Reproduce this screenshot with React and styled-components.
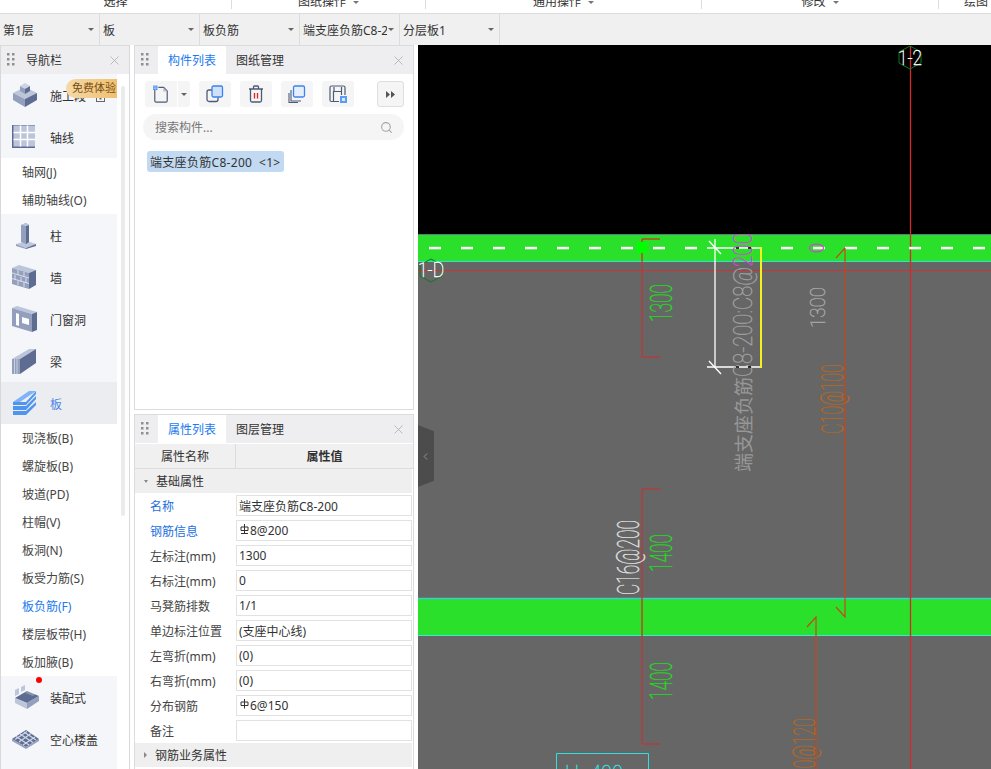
import styled, { createGlobalStyle } from 'styled-components';
import { X, ChevronLeft, Search } from 'lucide-react';

const GlobalStyle = createGlobalStyle`
    html, body {
        margin: 0;
        background: #fff;
        font-family: 'Noto Sans', 'Noto Sans CJK SC', 'Liberation Sans', sans-serif;
        font-size: 12px;
        color: #333;
    }
`;

const ribbonGroups = [
    { label: '选择', width: 232 },
    { label: '图纸操作', width: 194, caret: true },
    { label: '通用操作', width: 276, caret: true },
    { label: '修改', width: 237, caret: true },
    { label: '绘图', width: 52, tail: true },
];

const selectors = ['第1层', '板', '板负筋', '端支座负筋C8-200', '分层板1'];

const navItems = [
    { type: 'group', label: '施工段', icon: 'stage', badge: true },
    { type: 'group', label: '轴线', icon: 'grid' },
    { type: 'sub', label: '轴网(J)' },
    { type: 'sub', label: '辅助轴线(O)' },
    { type: 'group', label: '柱', icon: 'column' },
    { type: 'group', label: '墙', icon: 'wall' },
    { type: 'group', label: '门窗洞', icon: 'door' },
    { type: 'group', label: '梁', icon: 'beam' },
    { type: 'group', label: '板', icon: 'slab', active: true },
    { type: 'sub', label: '现浇板(B)' },
    { type: 'sub', label: '螺旋板(B)' },
    { type: 'sub', label: '坡道(PD)' },
    { type: 'sub', label: '柱帽(V)' },
    { type: 'sub', label: '板洞(N)' },
    { type: 'sub', label: '板受力筋(S)' },
    { type: 'sub', label: '板负筋(F)', active: true },
    { type: 'sub', label: '楼层板带(H)' },
    { type: 'sub', label: '板加腋(B)' },
    { type: 'group', label: '装配式', icon: 'prefab', dot: true },
    { type: 'group', label: '空心楼盖', icon: 'hollow' },
];

const properties = [
    { name: '名称', value: '端支座负筋C8-200', link: true },
    { name: '钢筋信息', value: '8@200', link: true, rebar: 'C' },
    { name: '左标注(mm)', value: '1300' },
    { name: '右标注(mm)', value: '0' },
    { name: '马凳筋排数', value: '1/1' },
    { name: '单边标注位置', value: '(支座中心线)' },
    { name: '左弯折(mm)', value: '(0)' },
    { name: '右弯折(mm)', value: '(0)' },
    { name: '分布钢筋', value: '6@150', rebar: 'A' },
    { name: '备注', value: '' },
];

const NavIcon = ({ kind }) => {
    const light = '#bcc6da';
    const mid = '#939fbd';
    const dark = '#5e6c92';
    const shapes = {
        stage: (
            <>
                <path d="M2 13l12-6 12 6-12 6z" fill={light} />
                <path d="M2 13v7l12 7v-8z" fill={mid} />
                <path d="M26 13v7l-12 7v-8z" fill={dark} />
                <path d="M9 6l5-3 5 3-5 3z" fill="#ccd4e4" />
                <path d="M9 6v5l5 3V9z" fill={mid} />
                <path d="M19 6v5l-5 3V9z" fill={dark} />
            </>
        ),
        grid: (
            <>
                <rect x="1" y="3" width="23" height="23" fill={dark} />
                <rect x="2.500" y="3.500" width="21.500" height="21" fill={light} />
                <path d="M9.500 3.500v21M16.500 3.500v21M2.500 10.500h21.500M2.500 17.500h21.500" stroke="#fff" strokeWidth="1.500" />
            </>
        ),
        column: (
            <>
                <path d="M5 24l11-3 9 3-10 4z" fill={light} />
                <path d="M5 24v2l10 3v-1z" fill={mid} />
                <path d="M25 24v2l-10 3v-1z" fill={dark} />
                <path d="M10 5l5-2 3 2v17l-3 2-5-2z" fill={mid} />
                <path d="M15 6l3-1v17l-3 2z" fill={dark} />
                <path d="M10 5l5-2 3 2-3 1z" fill={light} />
            </>
        ),
        wall: (
            <>
                <path d="M1 6l7-3 17 5-7 3z" fill={light} />
                <path d="M1 6l17 5v16L1 22z" fill={mid} />
                <path d="M18 11l7-3v15l-7 4z" fill={dark} />
                <path d="M1 11l17 5M1 16.500l17 5M7 8v5M13 10v5M4 13v5M10 15v5M15 16v5M7 19v4M13 20v5" stroke="#dfe4ee" strokeWidth="0.900" fill="none" />
            </>
        ),
        door: (
            <>
                <path d="M1 4l5-2 20 6-5 2z" fill={light} />
                <path d="M1 4l20 6v18L1 22z" fill={mid} />
                <path d="M21 10l5-2v18l-5 2z" fill={dark} />
                <path d="M5 9l3 1v12l-3-1z" fill="#fff" />
                <path d="M11 13l7 2v6l-7-2z" fill="#fff" />
            </>
        ),
        beam: (
            <>
                <path d="M1 13l17-10h7L9 13z" fill={light} />
                <path d="M1 13h8v15H1z" fill={mid} />
                <path d="M9 13L25 3v14L9 28z" fill={dark} />
                <path d="M3.500 13v15M6 13v15" stroke="#d4dae6" strokeWidth="0.800" />
            </>
        ),
        slab: (
            <>
                <path d="M2 14L18 3h7L9 14z" fill="#7fb2f7" />
                <path d="M2 14h13l10-11v3L15 17H2z" fill="#4f95f0" />
                <path d="M2 18h13l10-10v3L15 22H2z" fill="#4f95f0" />
                <path d="M2 23h13l10-9v3L15 27H2z" fill="#4f95f0" />
            </>
        ),
        prefab: (
            <>
                <path d="M4 16l12-7 12 5-12 7z" fill={dark} />
                <path d="M4 16v5l12 6v-6z" fill={light} />
                <path d="M28 14v5l-12 8v-6z" fill={mid} />
                <path d="M4 8l4-2v6l-4 2zM10 5l4-2v5l-4 2z" fill={light} />
                <path d="M17 8l9 3-4 3-8-3z" fill="#fff" opacity="0.250" />
            </>
        ),
        hollow: (
            <>
                <path d="M1 15l14-9 13 9-13 8z" fill={dark} />
                <path d="M1 15v2l14 8v-2zM28 15v2l-13 8v-2z" fill={mid} />
                <path d="M9 10l13 8.500M5 12.500l13 8.500M13 8l12 8M20 9.500L8 18M16 7.500L4 15.500M24 13L12 21" stroke="#cdd4e4" strokeWidth="1.400" />
            </>
        ),
    };
    return (
        <svg width="28" height="30" viewBox="0 0 28 30">
            {shapes[kind]}
        </svg>
    );
};

const Grip = () => (
    <svg width="8" height="14" viewBox="0 0 8 14">
        {[0, 5, 10].map((y) => (
            <g key={y} fill="#8f8f8f">
                <rect x="0" y={y} width="2.500" height="2.500" />
                <rect x="5" y={y} width="2.500" height="2.500" />
            </g>
        ))}
    </svg>
);

const RebarGlyph = ({ grade }) => (
    <RebarMark width="9" height="10" viewBox="0 0 9 10">
        <path d="M1 3h7v3.500H1zM4.500 0v9.500" fill="none" stroke="#333" strokeWidth="1" />
        {grade === 'C' && <path d="M1 9.500h7" stroke="#333" strokeWidth="1" />}
    </RebarMark>
);

const ToolIcon = ({ kind }) => {
    const line = '#4e5a75';
    if (kind === 'new') {
        return (
            <svg width="16" height="19" viewBox="0 0 18 20">
                <path d="M2 5v12a1.500 1.500 0 0 0 1.500 1.500h11A1.500 1.500 0 0 0 16 17V6l-4-4H6" fill="none" stroke={line} strokeWidth="1.300" />
                <path d="M11.500 2v4.500H16z" fill="#b9bfcc" />
                <rect x="0" y="0" width="5" height="5" fill="#3b82f0" />
                <path d="M1.200 0v5M3 0v5M0 1.500h5M0 3.300h5" stroke="#cfe0f8" strokeWidth="0.500" />
            </svg>
        );
    }
    if (kind === 'copy') {
        return (
            <svg width="18" height="18" viewBox="0 0 18 18">
                <rect x="1" y="5" width="11" height="11.500" rx="2" fill="none" stroke={line} strokeWidth="1.300" />
                <rect x="6" y="1" width="10.500" height="11" rx="1.500" fill="#cfe0f8" stroke="#3b82f0" strokeWidth="1.300" />
            </svg>
        );
    }
    if (kind === 'trash') {
        return (
            <svg width="16" height="18" viewBox="0 0 16 18">
                <path d="M1 4h14M5.500 4V2q0-1 1-1h3q1 0 1 1v2M2.500 4v11.500q0 1.500 1.500 1.500h8q1.500 0 1.500-1.500V4" fill="none" stroke={line} strokeWidth="1.300" />
                <path d="M6.500 8v5.500M9.500 8v5.500" stroke="#e02020" strokeWidth="1.300" />
            </svg>
        );
    }
    if (kind === 'stack') {
        return (
            <svg width="18" height="18" viewBox="0 0 18 18">
                <path d="M3 5v11h10M1 8v9.500h9" fill="none" stroke={line} strokeWidth="1.100" />
                <rect x="5.500" y="1" width="11" height="11" rx="1.500" fill="#e4eefc" stroke="#3b82f0" strokeWidth="1.300" />
            </svg>
        );
    }
    return (
        <svg width="18" height="18" viewBox="0 0 18 18">
            <path d="M10 16.500H2.500q-1.500 0-1.500-1.500V2.500Q1 1 2.500 1h12Q16 1 16 2.500V10M4.500 16V6.500h8V10M5 2v4.500M12.500 2v4.500" fill="none" stroke={line} strokeWidth="1.200" />
            <rect x="11" y="11" width="7" height="7" fill="#5b9cf5" />
            <rect x="13" y="13" width="3" height="3" fill="#dce9fb" />
        </svg>
    );
};

const dashStarts = [429, 461, 493, 525, 557, 589, 621, 653, 685, 781, 813, 845, 877, 909, 941, 973];

const CadCanvas = () => (
    <Drawing viewBox="418 45 573 724">
        <rect x="418" y="45" width="573" height="190" fill="#000" />
        <rect x="418" y="235" width="573" height="534" fill="#666" />

        <rect x="418" y="235" width="573" height="26" fill="#2be02b" />
        <rect x="418" y="598" width="573" height="38" fill="#2be02b" />
        <line x1="418" x2="991" y1="234.500" y2="234.500" stroke="#5a7a8a" />
        <line x1="418" x2="991" y1="261.500" y2="261.500" stroke="#35e0d0" />
        <line x1="418" x2="991" y1="598.500" y2="598.500" stroke="#3ccbd0" strokeWidth="1.500" />
        <line x1="418" x2="991" y1="635.500" y2="635.500" stroke="#35e8e0" />

        <line x1="418" x2="991" y1="270.500" y2="270.500" stroke="#c93434" />
        <line x1="910.500" x2="910.500" y1="46" y2="769" stroke="#d42a2a" strokeWidth="1.300" />

        {dashStarts.map((x) => (
            <rect key={x} x={x} y="246.800" width="12" height="2.500" fill="#fff" />
        ))}

        <path d="M660 239h-18v118h18" fill="none" stroke="#d42a2a" />
        <path d="M660 239h-18v22" fill="none" stroke="#a8581f" />
        <path d="M660 489h-18v255h18" fill="none" stroke="#d42a2a" />
        <line x1="642" x2="642" y1="598" y2="636" stroke="#a8581f" />
        <rect x="637" y="242" width="10" height="11" fill="#00ff00" />

        <path d="M715 239v128M707 248h54M707 367h54" fill="none" stroke="#fff" strokeWidth="1.300" />
        <path d="M709 241l12 13M709 361l12 13" stroke="#fff" strokeWidth="1.300" />
        <line x1="761" x2="761" y1="247" y2="368" stroke="#f2f21e" strokeWidth="2" />

        <path d="M845 248v369l-9-10M845 248l-9 10" fill="none" stroke="#c4481c" strokeWidth="1.200" />
        <path d="M816 769V617l-9 10" fill="none" stroke="#c4481c" strokeWidth="1.200" />

        <ellipse cx="816.500" cy="248" rx="7" ry="3.800" fill="none" stroke="#d83fd8" strokeWidth="1.200" />

        <CadText x="672" y="322" $color="#19e019" fontSize="32" textLength="38" transform="rotate(-90 672 322)">1300</CadText>
        <CadText x="672" y="572" $color="#19e019" fontSize="32" textLength="38" transform="rotate(-90 672 572)">1400</CadText>
        <CadText x="672" y="700" $color="#19e019" fontSize="32" textLength="38" transform="rotate(-90 672 700)">1400</CadText>
        <CadText x="825" y="328" $color="#a8a8a8" fontSize="21" textLength="41" transform="rotate(-90 825 328)">1300</CadText>
        <CadText x="843" y="434" $color="#b9661c" fontSize="32" textLength="70" transform="rotate(-90 843 434)">C10@100</CadText>
        <CadText x="639" y="595" $color="#e4e4e4" fontSize="32" textLength="75" transform="rotate(-90 639 595)">C16@200</CadText>
        <CadText x="815" y="788" $color="#b9661c" fontSize="32" textLength="70" transform="rotate(-90 815 788)">C10@120</CadText>

        <CadText x="751" y="472" $color="#979797" fontSize="19" textLength="95" $cjk transform="rotate(-90 751 472)">端支座负筋</CadText>
        <CadText x="752" y="377" $color="#a0a0a0" fontSize="25" textLength="110" transform="rotate(-90 752 377)">C8-200:C8@</CadText>
        <CadText x="752" y="267" $color="#d83fd8" fontSize="25" textLength="34" transform="rotate(-90 752 267)">200</CadText>
        <path d="M736 248h3M748 248h3M736 367h3M748 367h3" stroke="#000" strokeWidth="1.300" />

        <path d="M910 46l11 6v11l-11 6-11-6V52z" fill="none" stroke="#0c7a1c" />
        <path d="M431 259l11 6v11l-11 6-11-6v-11z" fill="none" stroke="#0c7a1c" />
        <CadText x="898" y="65" $color="#fff" fontSize="20" textLength="24">1-2</CadText>
        <CadText x="418" y="277" $color="#fff" fontSize="20" textLength="26">1-D</CadText>

        <path d="M556.500 769V753.500h92V769" fill="none" stroke="#2fe0e0" />
        <CadText x="565" y="781" $color="#2fe0e0" fontSize="22" textLength="58">H=400</CadText>
    </Drawing>
);

const App = () => {
    return (
        <Screen>
            <GlobalStyle />
            <Ribbon>
                {ribbonGroups.map((g) => (
                    <RibbonGroup key={g.label} $width={g.width} $tail={g.tail}>
                        <RibbonLabel>{g.label}</RibbonLabel>
                        {g.caret && <RibbonCaret />}
                    </RibbonGroup>
                ))}
            </Ribbon>

            <SelectorBar>
                {selectors.map((s) => (
                    <Selector key={s}>
                        <SelectorText>{s}</SelectorText>
                        <SmallCaret />
                    </Selector>
                ))}
                <SelectorRest />
            </SelectorBar>

            <Workspace>
                <NavPanel>
                    <PanelBar>
                        <GripSlot><Grip /></GripSlot>
                        <NavTitle>导航栏</NavTitle>
                        <CloseSlot><X size={15} strokeWidth={1.2} /></CloseSlot>
                    </PanelBar>
                    <NavBody>
                        <NavList>
                            {navItems.map((item) =>
                                item.type === 'group' ? (
                                    <NavGroup key={item.label} $active={item.active}>
                                        <NavIconSlot>
                                            <NavIcon kind={item.icon} />
                                            {item.dot && <RedDot />}
                                        </NavIconSlot>
                                        <NavGroupLabel $active={item.active}>{item.label}</NavGroupLabel>
                                        {item.badge && (
                                            <>
                                                <LockIcon width="9" height="10" viewBox="0 0 9 10">
                                                    <rect x="0.500" y="3" width="8" height="6.500" fill="none" stroke="#666" />
                                                    <path d="M2.500 3V1.500h4V3" fill="none" stroke="#666" />
                                                    <rect x="3.500" y="5" width="2" height="2.500" fill="#666" />
                                                </LockIcon>
                                                <TrialBadge>免费体验</TrialBadge>
                                            </>
                                        )}
                                    </NavGroup>
                                ) : (
                                    <NavSub key={item.label} $active={item.active}>{item.label}</NavSub>
                                )
                            )}
                            <NavFiller />
                        </NavList>
                        <NavScroll />
                    </NavBody>
                </NavPanel>

                <MiddleColumn>
                    <ListPanel>
                        <PanelBar>
                            <GripSlot><Grip /></GripSlot>
                            <Tab $active>构件列表</Tab>
                            <Tab>图纸管理</Tab>
                            <CloseSlot><X size={15} strokeWidth={1.2} /></CloseSlot>
                        </PanelBar>
                        <Toolbar>
                            <ToolButton $joined><ToolIcon kind="new" /></ToolButton>
                            <ToolDrop><SmallCaret /></ToolDrop>
                            <ToolButton><ToolIcon kind="copy" /></ToolButton>
                            <ToolButton><ToolIcon kind="trash" /></ToolButton>
                            <ToolButton><ToolIcon kind="stack" /></ToolButton>
                            <ToolButton><ToolIcon kind="save" /></ToolButton>
                            <MoreButton>
                                <svg width="9" height="7" viewBox="0 0 9 7">
                                    <path d="M0 0l4 3.500L0 7zM5 0l4 3.500L5 7z" fill="#555" />
                                </svg>
                            </MoreButton>
                        </Toolbar>
                        <SearchBox>
                            <SearchHint>搜索构件...</SearchHint>
                            <Search size={13} color="#a6a6a6" strokeWidth={2} />
                        </SearchBox>
                        <ComponentChip>端支座负筋C8-200&nbsp;&nbsp;&lt;1&gt;</ComponentChip>
                    </ListPanel>

                    <PropertyPanel>
                        <PanelBar>
                            <GripSlot><Grip /></GripSlot>
                            <Tab $active>属性列表</Tab>
                            <Tab>图层管理</Tab>
                            <CloseSlot><X size={15} strokeWidth={1.2} /></CloseSlot>
                        </PanelBar>
                        <PropertyHead>
                            <HeadName>属性名称</HeadName>
                            <HeadValue>属性值</HeadValue>
                        </PropertyHead>
                        <PropertyGroup>
                            <DownCaret />
                            基础属性
                        </PropertyGroup>
                        {properties.map((p) => (
                            <PropertyRow key={p.name}>
                                <PropertyName $link={p.link}>{p.name}</PropertyName>
                                <PropertyField>
                                    {p.rebar && <RebarGlyph grade={p.rebar} />}
                                    {p.value}
                                </PropertyField>
                            </PropertyRow>
                        ))}
                        <PropertyGroup>
                            <RightCaret />
                            钢筋业务属性
                        </PropertyGroup>
                    </PropertyPanel>
                </MiddleColumn>

                <CanvasArea>
                    <CadCanvas />
                    <CollapseHandle>
                        <ChevronLeft size={11} color="#b5b5b5" strokeWidth={1.500} />
                    </CollapseHandle>
                </CanvasArea>
            </Workspace>
        </Screen>
    );
};

// styled-component Section
const Screen = styled.div`
    width: 991px;
    height: 769px;
    overflow: hidden;
    display: flex;
    flex-direction: column;
    background: #fff;
`;

const Ribbon = styled.div`
    height: 13px;
    flex: none;
    display: flex;
    overflow: hidden;
    background: #fff;
    border-bottom: 1px solid #dcdcdc;
`;

const RibbonGroup = styled.div`
    width: ${({ $width }) => $width}px;
    height: 9px;
    flex: none;
    box-sizing: border-box;
    display: flex;
    justify-content: ${({ $tail }) => ($tail ? 'flex-start' : 'center')};
    align-items: flex-end;
    gap: 7px;
    padding-left: ${({ $tail }) => ($tail ? '25px' : '0')};
    border-right: ${({ $tail }) => ($tail ? 'none' : '1px solid #dcdcdc')};
`;

const RibbonLabel = styled.span`
    line-height: 16px;
    margin-bottom: -1px;
    white-space: nowrap;
`;

const RibbonCaret = styled.i`
    width: 0;
    height: 0;
    margin-bottom: 5px;
    border: 3px solid transparent;
    border-top-color: #777;
    border-bottom: none;
`;

const SelectorBar = styled.div`
    height: 31px;
    flex: none;
    display: flex;
    background: #f0f0f0;
`;

const Selector = styled.div`
    width: 100px;
    box-sizing: border-box;
    display: flex;
    align-items: center;
    justify-content: space-between;
    padding: 0 5px 0 3px;
    border-right: 1px solid #dcdcdc;
`;

const SelectorText = styled.span`
    width: 84px;
    overflow: hidden;
    white-space: nowrap;
`;

const SelectorRest = styled.div`
    flex: 1;
`;

const SmallCaret = styled.i`
    width: 0;
    height: 0;
    border-left: 3px solid transparent;
    border-right: 3px solid transparent;
    border-top: 3.500px solid #666;
`;

const Workspace = styled.div`
    flex: 1;
    min-height: 0;
    display: flex;
`;

const NavPanel = styled.div`
    width: 130px;
    flex: none;
    box-sizing: border-box;
    display: flex;
    flex-direction: column;
    border-left: 1px solid #d8d8d8;
    border-right: 1px solid #d8d8d8;
`;

const PanelBar = styled.div`
    height: 29px;
    flex: none;
    display: flex;
    align-items: stretch;
    background: #eeeef0;
    border-top: 1px solid #dcdcdc;
    box-sizing: border-box;
`;

const GripSlot = styled.div`
    width: 23px;
    flex: none;
    display: flex;
    align-items: center;
    padding-left: 6px;
    box-sizing: border-box;
`;

const NavTitle = styled.div`
    display: flex;
    align-items: center;
    padding-left: 2px;
`;

const CloseSlot = styled.div`
    margin-left: auto;
    width: 29px;
    display: flex;
    align-items: center;
    justify-content: center;
    color: #a8a8a8;
`;

const NavBody = styled.div`
    flex: 1;
    min-height: 0;
    display: flex;
`;

const NavList = styled.div`
    width: 116px;
    display: flex;
    flex-direction: column;
`;

const NavGroup = styled.div`
    position: relative;
    height: 42px;
    flex: none;
    display: flex;
    align-items: center;
    background: ${({ $active }) => ($active ? '#ecedf1' : '#f5f6f9')};
`;

const NavIconSlot = styled.div`
    position: relative;
    width: 28px;
    height: 30px;
    margin-left: 10px;
`;

const NavGroupLabel = styled.span`
    margin: 1px 0 0 11px;
    color: ${({ $active }) => ($active ? '#4a86e8' : '#333')};
`;

const NavSub = styled.div`
    height: 28px;
    flex: none;
    display: flex;
    align-items: center;
    padding-left: 21px;
    color: ${({ $active }) => ($active ? '#1a7af0' : '#444')};
`;

const NavFiller = styled.div`
    flex: 1;
    background: #f5f6f9;
`;

const NavScroll = styled.div`
    width: 4px;
    height: 430px;
    margin: 12px 0 0 4px;
    border-radius: 2px;
    background: #ebebeb;
`;

const RedDot = styled.i`
    position: absolute;
    top: -5px;
    right: -3px;
    width: 6px;
    height: 6px;
    border-radius: 50%;
    background: #f00;
`;

const LockIcon = styled.svg`
    position: absolute;
    left: 95px;
    top: 18px;
`;

const TrialBadge = styled.div`
    position: absolute;
    left: 65px;
    top: 5px;
    width: 51px;
    height: 19px;
    line-height: 18px;
    padding-left: 6px;
    box-sizing: border-box;
    white-space: nowrap;
    font-size: 11px;
    border-radius: 10px 0 0 10px;
    background: linear-gradient(90deg, #f5d9a8, #efc070);
    color: #7a4e12;
`;

const MiddleColumn = styled.div`
    width: 280px;
    margin-left: 4px;
    flex: none;
    display: flex;
    flex-direction: column;
    gap: 4px;
`;

const ListPanel = styled.div`
    height: 365px;
    flex: none;
    box-sizing: border-box;
    border: 1px solid #dcdcdc;
    border-top: none;
`;

const Tab = styled.div`
    width: 68px;
    display: flex;
    align-items: center;
    justify-content: center;
    background: ${({ $active }) => ($active ? '#fff' : 'transparent')};
    color: ${({ $active }) => ($active ? '#1a7af0' : '#333')};
`;

const Toolbar = styled.div`
    display: flex;
    gap: 9px;
    padding: 7px 10px 0 10px;
    height: 26px;
`;

const ToolButton = styled.div`
    width: 32px;
    height: 26px;
    flex: none;
    display: flex;
    align-items: center;
    justify-content: center;
    border-radius: ${({ $joined }) => ($joined ? '3px 0 0 3px' : '3px')};
    background: #f5f5f5;
    margin-right: ${({ $joined }) => ($joined ? '-8px' : '0')};
`;

const ToolDrop = styled.div`
    width: 12px;
    height: 26px;
    flex: none;
    display: flex;
    align-items: center;
    justify-content: center;
    border-radius: 0 3px 3px 0;
    background: #f5f5f5;
`;

const MoreButton = styled.div`
    width: 25px;
    height: 24px;
    margin-left: 14px;
    flex: none;
    display: flex;
    align-items: center;
    justify-content: center;
    border: 1px solid #dedede;
    border-radius: 3px;
    background: #f5f5f5;
`;

const SearchBox = styled.div`
    height: 26px;
    margin: 7px 9px 0 8px;
    display: flex;
    align-items: center;
    justify-content: space-between;
    padding: 0 11px 0 12px;
    border-radius: 13px;
    background: #f5f5f5;
`;

const SearchHint = styled.span`
    color: #777;
`;

const ComponentChip = styled.div`
    width: max-content;
    height: 21px;
    margin: 11px 0 0 12px;
    padding: 0 3px;
    display: flex;
    align-items: center;
    border-radius: 3px;
    background: #c2d9f2;
    white-space: nowrap;
    letter-spacing: 0.3px;
`;

const PropertyPanel = styled.div`
    flex: 1;
    min-height: 0;
    box-sizing: border-box;
    border-left: 1px solid #dcdcdc;
    border-right: 1px solid #dcdcdc;
`;

const PropertyHead = styled.div`
    height: 24px;
    margin-top: 1px;
    display: flex;
    background: #f0f0f0;
    border-bottom: 1px solid #dcdcdc;
`;

const HeadName = styled.div`
    width: 100px;
    display: flex;
    align-items: center;
    justify-content: center;
    border-right: 1px solid #dcdcdc;
`;

const HeadValue = styled.div`
    flex: 1;
    display: flex;
    align-items: center;
    justify-content: center;
    font-weight: 700;
`;

const PropertyGroup = styled.div`
    height: 24px;
    display: flex;
    align-items: center;
    padding-left: 9px;
    gap: 8px;
    margin-right: 1px;
    background: #efefef;
`;

const DownCaret = styled.i`
    width: 0;
    height: 0;
    border-left: 2.500px solid transparent;
    border-right: 2.500px solid transparent;
    border-top: 3px solid #888;
`;

const RightCaret = styled.i`
    width: 0;
    height: 0;
    border-top: 3px solid transparent;
    border-bottom: 3px solid transparent;
    border-left: 3px solid #888;
`;

const PropertyRow = styled.div`
    height: 25px;
    display: flex;
    align-items: center;
    padding-right: 1px;
`;

const PropertyName = styled.div`
    width: 101px;
    box-sizing: border-box;
    padding-left: 15px;
    white-space: nowrap;
    color: ${({ $link }) => ($link ? '#1a6fe0' : '#444')};
`;

const PropertyField = styled.div`
    flex: 1;
    height: 21px;
    box-sizing: border-box;
    display: flex;
    align-items: center;
    padding-left: 2px;
    border: 1px solid #e2e2e2;
    background: #fff;
`;

const RebarMark = styled.svg`
    margin: -3px 1px 0 1px;
`;

const CanvasArea = styled.div`
    position: relative;
    flex: 1;
    min-width: 0;
    margin-left: 4px;
`;

const Drawing = styled.svg`
    display: block;
    width: 573px;
    height: 724px;
`;

// thin face stands in for the single-stroke CAD font of the drawing
const CadText = styled.text.attrs({ lengthAdjust: 'spacingAndGlyphs' })`
    font-family: ${({ $cjk }) => ($cjk ? "'Noto Sans CJK SC', sans-serif" : "Roboto, 'Liberation Sans', sans-serif")};
    font-weight: ${({ $cjk }) => ($cjk ? 400 : 100)};
    fill: ${({ $color }) => $color};
    stroke: ${({ $cjk, $color }) => ($cjk ? 'none' : $color)};
    stroke-width: 0.400;
`;

const CollapseHandle = styled.div`
    position: absolute;
    left: 0;
    top: 380px;
    width: 16px;
    height: 62px;
    display: flex;
    align-items: center;
    padding-left: 2px;
    box-sizing: border-box;
    background: #4c4c4c;
    clip-path: polygon(0 0, 100% 10%, 100% 90%, 0 100%);
`;

export default App;
